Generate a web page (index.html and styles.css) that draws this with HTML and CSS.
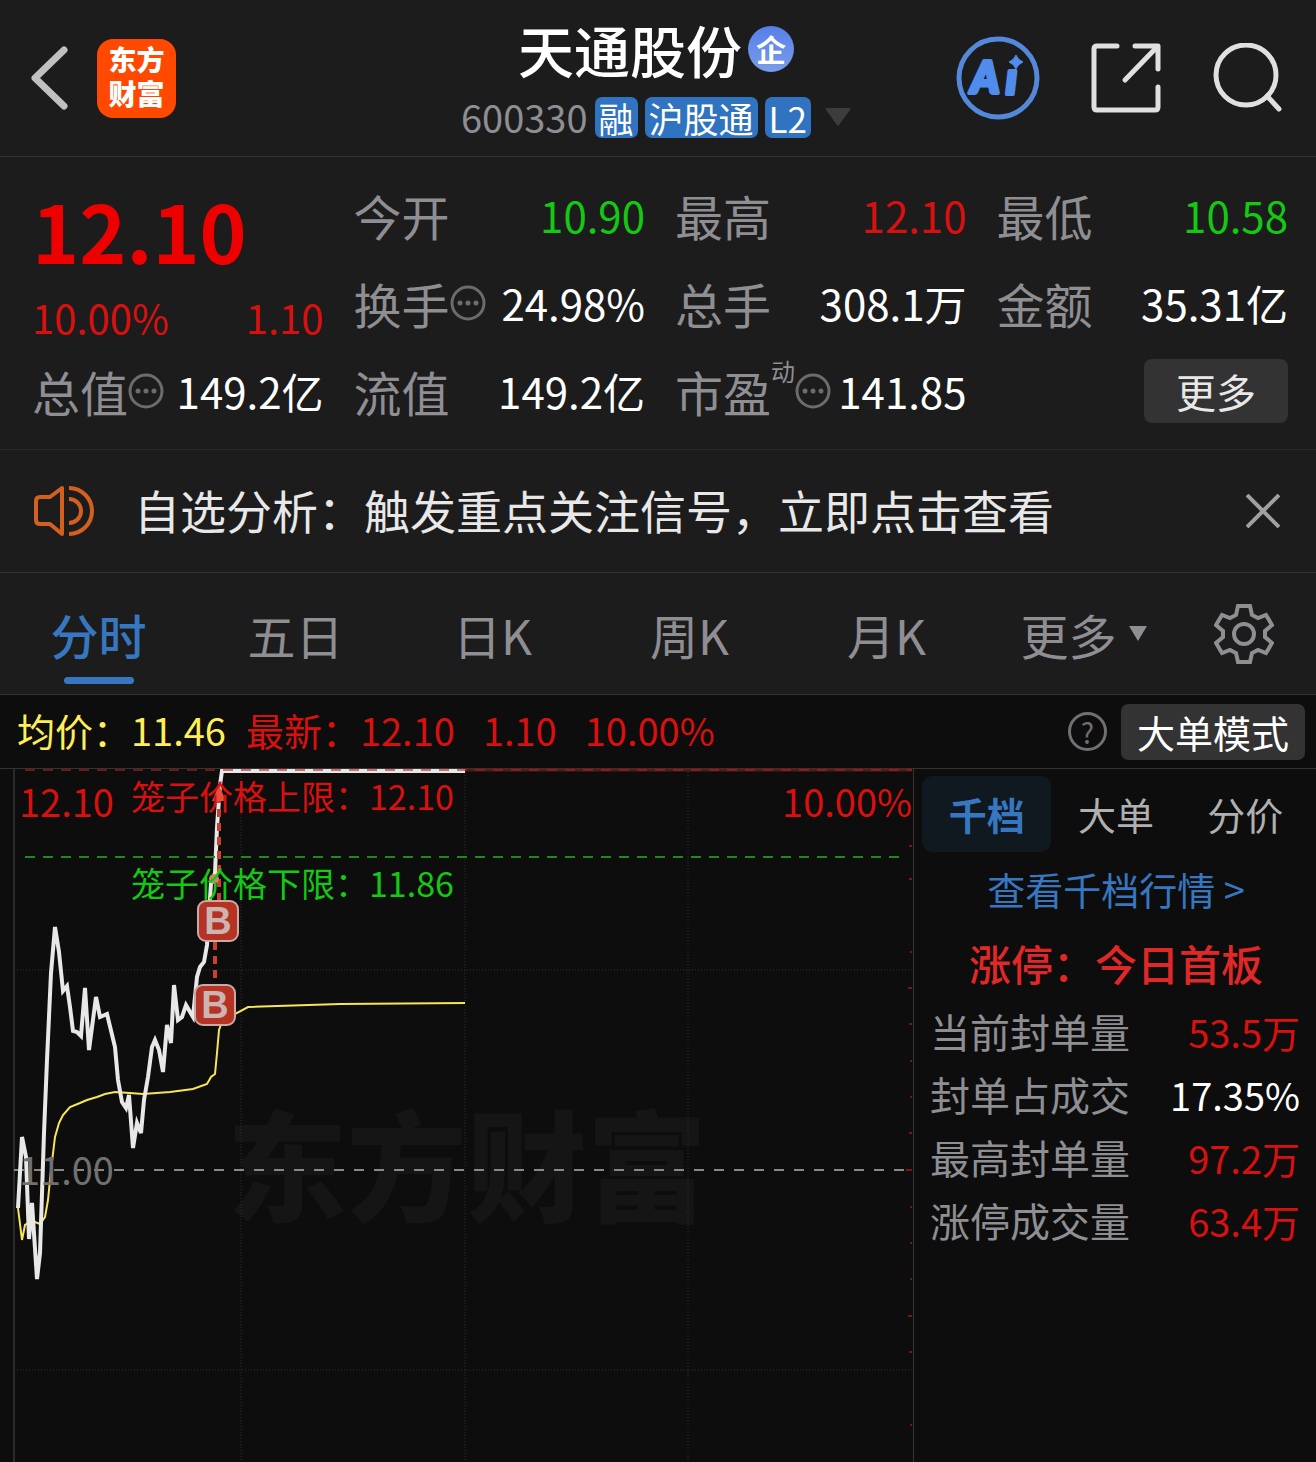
FILE: index.html
```html
<!DOCTYPE html>
<html lang="zh-CN">
<head>
  <meta charset="UTF-8">
  <meta name="viewport" content="width=device-width, initial-scale=1.0">
  <title>天通股份 600330</title>
  <link rel="stylesheet" href="styles.css">
</head>
<body>

<header class="header">
  <div class="header-left">
    <button type="button" class="icon-button" aria-label="返回">
      <svg width="40" height="66" viewBox="0 0 40 66" fill="none" stroke="#c0c0c0" stroke-width="7" stroke-linecap="round" stroke-linejoin="round">
        <path d="M34 5L5 33L34 61"/>
      </svg>
    </button>
    <div class="logo"><span>东方</span><span>财富</span></div>
  </div>

  <div class="header-title">
    <h1>天通股份<span class="company-badge">企</span></h1>
    <div class="codes">
      <span class="code">600330</span>
      <span class="tag">融</span>
      <span class="tag">沪股通</span>
      <span class="tag">L2</span>
      <svg class="caret" width="26" height="18" viewBox="0 0 26 18" fill="#3c3c3c"><path d="M2 0H24Q26 0 25 2L14 17Q13 18 12 17L1 2Q0 0 2 0Z"/></svg>
    </div>
  </div>

  <div class="header-right">
    <button type="button" class="icon-button" aria-label="AI">
      <svg width="84" height="84" viewBox="0 0 84 84">
        <circle cx="42" cy="42" r="39" fill="none" stroke="#5488db" stroke-width="5"/>
        <text class="ai-text" x="15" y="57">A</text>
        <text class="ai-text" x="50" y="58">ı</text>
        <path d="M60 19Q62 24 67 26Q62 28 60 33Q58 28 53 26Q58 24 60 19Z" fill="#508cec" stroke="#508cec"/>
      </svg>
    </button>
    <button type="button" class="icon-button" aria-label="分享">
      <svg width="70" height="70" viewBox="0 0 70 70" fill="none" stroke="#e0e0e0" stroke-width="5" stroke-linecap="round" stroke-linejoin="round">
        <path d="M26 3H6Q3 3 3 6V64Q3 67 6 67H64Q67 67 67 64V44M44 3H67V26M66 4L34 37"/>
      </svg>
    </button>
    <button type="button" class="icon-button" aria-label="搜索">
      <svg width="70" height="70" viewBox="0 0 70 70" fill="none" stroke="#e0e0e0" stroke-width="5" stroke-linecap="round">
        <circle cx="34" cy="32" r="30"/>
        <path d="M55 53L67 66"/>
      </svg>
    </button>
  </div>
</header>

<section class="quote">
  <div class="price">
    <strong class="price-now">12.10</strong>
    <div class="price-change"><span>10.00%</span><span>1.10</span></div>
  </div>
  <div class="stat"><span class="label">今开</span><span class="down">10.90</span></div>
  <div class="stat"><span class="label">最高</span><span class="up">12.10</span></div>
  <div class="stat"><span class="label">最低</span><span class="down">10.58</span></div>
  <div class="stat"><span class="label">换手<svg class="more-dots" viewBox="0 0 36 36"><circle cx="18" cy="18" r="16"/><path d="M10 18h0M18 18h0M26 18h0"/></svg></span><span>24.98%</span></div>
  <div class="stat"><span class="label">总手</span><span>308.1万</span></div>
  <div class="stat"><span class="label">金额</span><span>35.31亿</span></div>
  <div class="stat"><span class="label">总值<svg class="more-dots" viewBox="0 0 36 36"><circle cx="18" cy="18" r="16"/><path d="M10 18h0M18 18h0M26 18h0"/></svg></span><span>149.2亿</span></div>
  <div class="stat"><span class="label">流值</span><span>149.2亿</span></div>
  <div class="stat"><span class="label">市盈<sup>动</sup><svg class="more-dots" viewBox="0 0 36 36"><circle cx="18" cy="18" r="16"/><path d="M10 18h0M18 18h0M26 18h0"/></svg></span><span>141.85</span></div>
  <div class="stat stat-more"><button type="button" class="more-button">更多</button></div>
</section>

<section class="notice">
  <svg width="62" height="52" viewBox="0 0 62 52" fill="none" stroke="#d4601f" stroke-width="4">
    <path d="M30 3V49L18 39H8Q4 39 4 35V16Q4 12 8 12H18Z" stroke-linejoin="round"/>
    <path d="M37 14A12 12 0 0 1 37 38M37 3A23 23 0 0 1 37 49"/>
  </svg>
  <p>自选分析：触发重点关注信号，立即点击查看</p>
  <button type="button" class="icon-button" aria-label="关闭">
    <svg width="34" height="34" viewBox="0 0 34 34" fill="none" stroke="#a0a0a0" stroke-width="4"><path d="M1 1L33 33M33 1L1 33"/></svg>
  </button>
</section>

<nav class="tabs">
  <button type="button" class="tab active">分时</button>
  <button type="button" class="tab">五日</button>
  <button type="button" class="tab">日K</button>
  <button type="button" class="tab">周K</button>
  <button type="button" class="tab">月K</button>
  <button type="button" class="tab">更多<svg width="18" height="15" viewBox="0 0 18 15" fill="#8e8e93"><path d="M0 0H18L9 15Z"/></svg></button>
  <button type="button" class="tab-settings" aria-label="设置">
    <svg width="60" height="60" viewBox="0 0 60 60" fill="none" stroke="#8e8e93" stroke-width="4">
      <path d="M24 2H36L38 11L44 14L52 11L58 21L51 27V33L58 39L52 49L44 46L38 49L36 58H24L22 49L16 46L8 49L2 39L9 33V27L2 21L8 11L16 14L22 11Z"/>
      <circle cx="30" cy="30" r="10"/>
    </svg>
  </button>
</nav>

<div class="summary">
  <span class="average">均价：11.46</span>
  <span class="latest"><span>最新：12.10</span><span>1.10</span><span>10.00%</span></span>
  <button type="button" class="help" aria-label="帮助">?</button>
  <button type="button" class="mode-button">大单模式</button>
</div>

<main class="main">
  <svg class="chart" viewBox="0 0 913 693">
    <text class="watermark" x="227" y="444">东方财富</text>

    <!-- grid -->
    <path class="axis" d="M14 0V693"/>
    <path class="grid" d="M241 0V693M465 0V693M688 0V693M14 201H912M14 601H912"/>
    <path class="middle" d="M14 401H912"/>
    <path class="ticks" d="M909 77h3M909 110h3M910 183h2M908 219h4M909 255h3M910 292h2M910 328h2M909 364h3M906 401h6M910 438h2M910 474h2M910 510h2M908 547h4M909 583h3M910 656h2"/>

    <!-- prices -->
    <polyline class="average-line" points="18,439 22,471 25,456 30,453 35,453 40,455 45,448 48,431 51,401 55,368 59,354 63,346 70,338 80,334 87,331 97,328 105,325 115,323 130,324 143,325 170,323 193,320 207,315 211,308 215,305 217,284 219,261 222,253 233,246 248,238 340,235 465,234"/>
    <polyline class="price-line" points="18,439 22,368 26,388 29,470 32,434 37,510 40,484 44,364 47,291 51,204 55,158 59,183 63,222 67,217 70,238 73,262 77,263 81,267 85,219 89,281 96,228 100,248 107,245 115,278 118,311 122,333 126,339 129,326 133,379 137,354 141,364 144,331 148,308 152,278 155,271 159,281 163,303 167,256 171,274 174,216 178,251 182,248 186,236 193,248 197,208 200,198 204,193 207,176 211,114 215,104 217,58 220,16 222,2 465,2"/>
    <path class="limit-solid" d="M465 1H912"/>
    <path class="limit-up" d="M25 1H912"/>
    <path class="limit-down" d="M25 88H902"/>

    <!-- buy points -->
    <path class="buy-line" d="M219 26V131M215 173V216"/>
    <path d="M219 16L226 32H212Z" fill="#ee4a3a"/>
    <circle cx="214" cy="110" r="5" fill="#d9806a"/>
    <rect class="buy-box" x="198" y="132" width="40" height="40" rx="8"/>
    <text class="buy-text" x="218" y="165">B</text>
    <rect class="buy-box" x="195" y="216" width="40" height="40" rx="8"/>
    <text class="buy-text" x="215" y="249">B</text>

    <text class="scale red" x="19" y="48">12.10</text>
    <text class="scale red" x="912" y="48" text-anchor="end">10.00%</text>
    <text class="scale gray" x="19" y="416">11.00</text>
    <text class="cage red" x="131" y="41">笼子价格上限：12.10</text>
    <text class="cage green" x="131" y="128">笼子价格下限：11.86</text>
  </svg>

  <aside class="side">
    <div class="side-tabs">
      <button type="button" class="side-tab active">千档</button>
      <button type="button" class="side-tab">大单</button>
      <button type="button" class="side-tab">分价</button>
    </div>
    <a href="#" class="side-link">查看千档行情 &gt;</a>
    <h2>涨停：今日首板</h2>
    <dl class="orders">
      <div><dt>当前封单量</dt><dd class="up">53.5万</dd></div>
      <div><dt>封单占成交</dt><dd>17.35%</dd></div>
      <div><dt>最高封单量</dt><dd class="up">97.2万</dd></div>
      <div><dt>涨停成交量</dt><dd class="up">63.4万</dd></div>
    </dl>
  </aside>
</main>

</body>
</html>
```
FILE: styles.css
```css
* {
  margin: 0;
  padding: 0;
  box-sizing: border-box;
}

body {
  background-color: #1c1c1c;
  color: #fff;
  font-family: "Noto Sans CJK SC", sans-serif;
}

button {
  border: none;
  background: none;
  color: inherit;
  font-family: inherit;
  cursor: pointer;
}

svg {
  display: block;
  flex-shrink: 0;
}

.up {
  color: #d81010;
}

.down {
  color: #14c814;
}

/* header */
.header {
  display: grid;
  grid-template-columns: 1fr auto 1fr;
  align-items: center;
  height: 157px;
  padding: 0 34px 0 30px;
  border-bottom: 1px solid #333;
}

.header-left {
  display: flex;
  align-items: center;
  gap: 27px;
}

.logo {
  display: flex;
  flex-direction: column;
  align-items: center;
  justify-content: center;
  width: 79px;
  height: 79px;
  padding-bottom: 4px;
  border-radius: 16px;
  background-color: #ff4800;
  font-size: 28px;
  font-weight: 900;
  line-height: 34px;
}

.header-title {
  display: flex;
  flex-direction: column;
  align-items: center;
  padding-bottom: 10px;
}

.header-title h1 {
  display: flex;
  align-items: center;
  gap: 6px;
  font-size: 56px;
  font-weight: 500;
  line-height: 80px;
}

.company-badge {
  width: 46px;
  height: 46px;
  border-radius: 50%;
  background: linear-gradient(#5580e8, #7a9cea);
  font-size: 30px;
  font-weight: 700;
  line-height: 44px;
  text-align: center;
}

.codes {
  display: flex;
  align-items: center;
  gap: 7px;
  margin-top: 8px;
}

.code {
  color: #8e8e93;
  font-size: 38px;
  line-height: 40px;
}

.tag {
  padding: 0 4px;
  border-radius: 7px;
  background-color: #3073c1;
  font-size: 35px;
  line-height: 41px;
}

.caret {
  margin-left: 7px;
}

.header-right {
  display: flex;
  align-items: center;
  justify-content: flex-end;
  gap: 51px;
}

.ai-text {
  fill: #508cec;
  stroke: #508cec;
  stroke-width: 4;
  stroke-linejoin: round;
  font-family: Lato, sans-serif;
  font-size: 43px;
  font-style: italic;
  font-weight: 900;
}

/* quote */
.quote {
  display: grid;
  grid-template-columns: repeat(4, 1fr);
  grid-auto-rows: 88px;
  column-gap: 30px;
  padding: 14px 28px 14px 32px;
  border-bottom: 1px solid #282828;
}

.price {
  grid-row: span 2;
}

.price-now {
  display: block;
  color: #ee0000;
  font-size: 80px;
  font-weight: 700;
  line-height: 116px;
}

.price-change {
  display: flex;
  justify-content: space-between;
  color: #d81010;
  font-size: 40px;
  line-height: 60px;
}

.stat {
  display: flex;
  align-items: center;
  justify-content: space-between;
  font-size: 42px;
  line-height: 64px;
  white-space: nowrap;
}

.label {
  display: flex;
  align-items: center;
  color: #8e8e93;
  font-size: 48px;
}

.label sup {
  align-self: flex-start;
  font-size: 24px;
  line-height: 24px;
}

.more-dots {
  width: 36px;
  height: 36px;
  fill: none;
  stroke: #6c6c6e;
  stroke-width: 3;
}

.more-dots path {
  stroke-width: 5;
  stroke-linecap: round;
}

.stat-more {
  justify-content: flex-end;
}

.more-button {
  padding: 0 32px;
  border-radius: 8px;
  background-color: #333;
  color: #e8e8e8;
  font-size: 40px;
  line-height: 64px;
}

/* notice */
.notice {
  display: flex;
  align-items: center;
  height: 123px;
  padding: 0 36px 0 32px;
  border-bottom: 1px solid #333;
}

.notice p {
  flex: 1;
  margin-left: 40px;
  padding-bottom: 4px;
  color: #e8e8e8;
  font-size: 46px;
  line-height: 64px;
}

/* period tabs */
.tabs {
  display: flex;
  height: 122px;
  border-bottom: 1px solid #333;
}

.tab {
  position: relative;
  display: flex;
  flex: 1;
  align-items: center;
  justify-content: center;
  gap: 12px;
  color: #8e8e93;
  font-size: 48px;
}

.tab.active {
  color: #3777c0;
  font-weight: 500;
}

.tab.active::after {
  content: "";
  position: absolute;
  bottom: 10px;
  width: 70px;
  height: 7px;
  border-radius: 4px;
  background-color: #3777c0;
}

.tab-settings {
  padding: 0 42px 0 32px;
}

/* summary */
.summary {
  display: flex;
  align-items: center;
  height: 74px;
  padding: 0 11px 0 17px;
  border-bottom: 1px solid #333;
  background-color: #0d0d0d;
  font-size: 38px;
  line-height: 52px;
}

.average,
.latest {
  padding-bottom: 4px;
}

.average {
  color: #ffee58;
}

.latest {
  display: flex;
  gap: 28px;
  margin-left: 20px;
  color: #d81010;
}

.help {
  width: 39px;
  height: 39px;
  margin-left: auto;
  border: 3px solid #707070;
  border-radius: 50%;
  color: #707070;
  font-size: 28px;
  line-height: 32px;
}

.mode-button {
  margin-left: 14px;
  padding: 0 16px;
  border-radius: 7px;
  background-color: #333;
  font-size: 38px;
  line-height: 56px;
}

/* chart and side panel */
.main {
  display: grid;
  grid-template-columns: 913fr 403fr;
  background-color: #0d0d0d;
}

.chart {
  width: 100%;
  height: auto;
  fill: none;
}

.watermark {
  fill: #151515;
  font-size: 120px;
  font-weight: 900;
}

.axis {
  stroke: #2a2a2a;
  stroke-width: 2;
}

.grid {
  stroke: #333;
  stroke-dasharray: 1 2;
}

.middle {
  stroke: #888;
  stroke-width: 2;
  stroke-dasharray: 10 10;
}

.ticks {
  stroke: #7a1515;
  stroke-width: 2;
}

.price-line {
  stroke: #e8e8e8;
  stroke-width: 4;
}

.average-line {
  stroke: #f5e65a;
  stroke-width: 2;
}

.limit-solid {
  stroke: #5c1616;
  stroke-width: 3;
}

.limit-up {
  stroke: #b02020;
  stroke-width: 2;
  stroke-dasharray: 10 8;
  opacity: 0.6;
}

.limit-down {
  stroke: #1d8a1d;
  stroke-width: 2;
  stroke-dasharray: 10 8;
}

.buy-line {
  stroke: #c8402f;
  stroke-width: 4;
  stroke-dasharray: 8 6;
}

.buy-box {
  fill: #b43324;
  stroke: #cbaaa6;
  stroke-width: 2;
}

.buy-text {
  fill: #cdb4b1;
  font-family: "Liberation Sans", sans-serif;
  font-size: 38px;
  font-weight: 700;
  text-anchor: middle;
}

.scale {
  font-size: 38px;
}

.cage {
  font-size: 34px;
}

.red {
  fill: #d81010;
}

.green {
  fill: #14c814;
}

.gray {
  fill: #707070;
}

.side {
  padding: 7px 6px 0 8px;
  border-left: 1px solid #333;
}

.side-tabs {
  display: flex;
}

.side-tab {
  flex: 1;
  border-radius: 10px;
  color: #b0b0b0;
  font-size: 38px;
  line-height: 76px;
}

.side-tab.active {
  background-color: #101820;
  color: #3777c0;
  font-weight: 700;
}

.side-link {
  display: block;
  color: #3777c0;
  font-size: 38px;
  line-height: 74px;
  text-align: center;
  text-decoration: none;
}

.side h2 {
  color: #e02828;
  font-size: 42px;
  font-weight: 500;
  line-height: 74px;
  text-align: center;
}

.orders div {
  display: flex;
  justify-content: space-between;
  padding: 0 10px 0 8px;
  line-height: 63px;
}

.orders dt {
  color: #8e8e93;
  font-size: 40px;
}

.orders dd {
  font-size: 38px;
}
```
